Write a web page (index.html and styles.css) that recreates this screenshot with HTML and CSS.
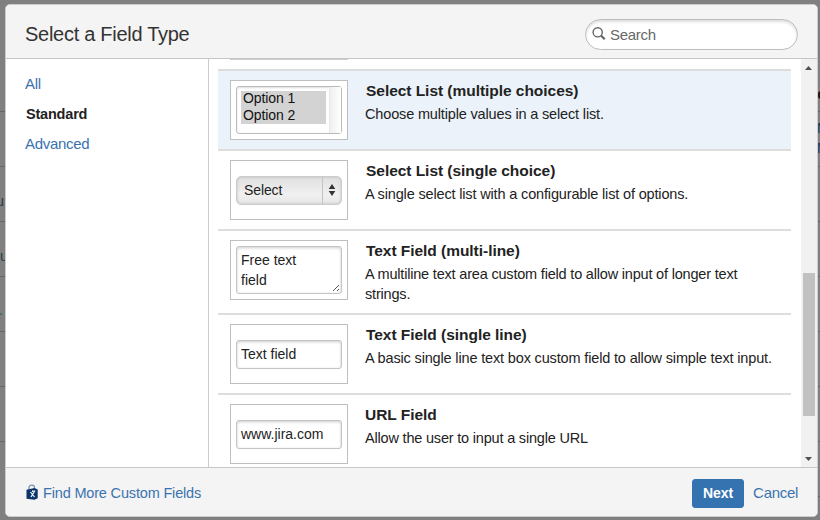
FILE: index.html
```
<!DOCTYPE html>
<html lang="en">
<head>
<meta charset="utf-8">
<title>Select a Field Type</title>
<link rel="stylesheet" href="styles.css">
</head>
<body>
<div class="page-left" aria-hidden="true"><span class="bit u1">u</span><span class="bit u2">u</span><span class="bit u3">.</span></div>
<div class="page-right" aria-hidden="true"><span class="bit e">e</span><span class="bit m1">M</span><span class="bit m2">M</span></div>
<main class="dialog">
  <header class="header">
    <h1>Select a Field Type</h1>
    <label class="search">
      <svg width="14" height="14" viewBox="0 0 14 14" fill="none" stroke="#666"><circle cx="5.7" cy="5.3" r="4.6" stroke-width="1.4"/><path d="M9 8.5l3.7 3.8" stroke-width="2.2"/></svg>
      <span>Search</span>
    </label>
  </header>
  <div class="body">
    <nav class="sidebar">
      <a class="link">All</a>
      <a class="current">Standard</a>
      <a class="link">Advanced</a>
    </nav>
    <section class="content">
      <div class="list">
        <div class="previous"><div class="preview-end"></div></div>
        <article class="row selected">
          <div class="preview"><div class="multi"><div class="options"><span>Option 1</span><span>Option 2</span></div><i></i></div></div>
          <div class="info"><h2>Select List (multiple choices)</h2><p>Choose multiple values in a select list.</p></div>
        </article>
        <article class="row">
          <div class="preview"><div class="select"><span>Select</span><i><svg width="8" height="12" viewBox="0 0 8 12" fill="#333"><path d="M4 0l3.3 5H.7zM4 12l3.3-5H.7z"/></svg></i></div></div>
          <div class="info"><h2>Select List (single choice)</h2><p>A single select list with a configurable list of options.</p></div>
        </article>
        <article class="row tall">
          <div class="preview"><div class="area">Free text<br>field<svg class="grip" width="8" height="8" viewBox="0 0 8 8" stroke="#555"><path d="M1 7l6-6M5 7l2-2"/></svg></div></div>
          <div class="info"><h2>Text Field (multi-line)</h2><p class="tight">A multiline text area custom field to allow input of longer text<br>strings.</p></div>
        </article>
        <article class="row">
          <div class="preview"><div class="input">Text field</div></div>
          <div class="info"><h2>Text Field (single line)</h2><p>A basic single line text box custom field to allow simple text input.</p></div>
        </article>
        <article class="row">
          <div class="preview"><div class="input">www.jira.com</div></div>
          <div class="info"><h2 class="flush">URL Field</h2><p class="tight">Allow the user to input a single URL</p></div>
        </article>
      </div>
      <div class="scrollbar">
        <svg width="7" height="4" viewBox="0 0 7 4" fill="#505050"><path d="M0 4L3.5 0 7 4z"/></svg>
        <div class="thumb"></div>
        <svg width="7" height="4" viewBox="0 0 7 4" fill="#505050"><path d="M0 0l3.5 4L7 0z"/></svg>
      </div>
    </section>
  </div>
  <footer class="footer">
    <a class="more">
      <svg width="12" height="16" viewBox="0 0 12 16"><path d="M3 5.5V3.5C3 .2 8.5 .2 8.5 3.500V5.500" fill="none" stroke="#7e91b0" stroke-width="1.3"/><path d="M.5 5.800L8.500 4 11.700 5.500v8.700L8.500 15.800.5 14.700z" fill="#0b346d"/><path d="M4.500 8l4 5M9 6.500l-4 6.500" stroke="#fff" stroke-width="1.200" fill="none"/><circle cx="6.800" cy="7.200" r=".9" fill="#fff"/></svg>
      <span>Find More Custom Fields</span>
    </a>
    <div class="actions"><button>Next</button><a class="cancel">Cancel</a></div>
  </footer>
</main>
</body>
</html>
```
FILE: styles.css
```
* { box-sizing: border-box; }
body {
  margin: 0;
  width: 820px;
  height: 520px;
  padding: 4px 2px 3px 5px;
  overflow: hidden;
  position: relative;
  background: #808080;
  color: #222;
  font: 15px/20px "Liberation Sans", Arial, sans-serif;
}
h1, h2, p { margin: 0; white-space: nowrap; }
.page-left, .page-right {
  position: absolute;
  top: 111px;
  height: 332px;
  background: repeating-linear-gradient(#666 0 1px, transparent 1px 55px);
}
.page-left { left: 0; width: 5px; }
.page-right { right: 0; top: 111px; width: 3px; height: 409px; }
.bit { position: absolute; font-size: 14px; line-height: 16px; color: #253d4b; }
.u1 { right: 1px; top: 82px; }
.u2 { left: 0; top: 137px; }
.u3 { left: -1px; top: 191px; color: #23605c; }
.e { right: -5px; top: -25px; font-weight: bold; color: #111; }
.m1 { left: 0; top: 9px; color: #123c66; }
.m2 { left: 0; top: 29px; color: #123c66; }
.dialog {
  position: relative;
  height: 513px;
  display: flex;
  flex-direction: column;
  border: 1px solid #ccc;
  border-radius: 5px;
  overflow: hidden;
  background: #fff;
}
.header {
  height: 54px;
  flex: none;
  display: flex;
  align-items: center;
  justify-content: space-between;
  padding: 4px 19px 0 19px;
  background: #f4f4f4;
  border-bottom: 1px solid #c6c6c6;
}
h1 { font-size: 20px; font-weight: 400; line-height: 24px; letter-spacing: -.28px; color: #333; }
.search {
  width: 213px;
  height: 31px;
  margin-top: 1px;
  display: flex;
  align-items: center;
  gap: 4px;
  padding-left: 6px;
  border: 1px solid #bdbdbd;
  border-radius: 16px;
  background: #fff;
  box-shadow: inset 0 2px 3px #ddd;
  color: #686868;
  letter-spacing: -.3px;
}
.search svg { margin-top: -1px; }
.search span { padding-top: 2px; }
.body { height: 408px; flex: none; display: flex; }
.sidebar {
  width: 203px;
  padding: 15px 19px;
  display: flex;
  flex-direction: column;
  gap: 10px;
  border-right: 1px solid #ccc;
}
.link, .more, .cancel { color: #3b73af; letter-spacing: -.3px; }
.current { font-weight: bold; font-size: 14.5px; letter-spacing: -.2px; padding-left: 1px; }
.content { flex: 1; display: flex; justify-content: space-between; padding-left: 9px; overflow: hidden; }
.list { width: 573px; }
.previous { height: 12px; padding-left: 12px; border-bottom: 2px solid #ddd; }
.preview-end { width: 118px; height: 1px; background: #ccc; }
.row { height: 80px; display: flex; gap: 17px; padding: 9px 0 0 12px; border-bottom: 2px solid #ddd; }
.tall { height: 84px; }
.selected { background: #ebf2f9; }
.preview { width: 118px; height: 60px; padding: 5px; display: flex; align-items: center; border: 1px solid #bfbfbf; background: #fff; font-size: 14px; }
.info { padding-top: 1px; }
h2 { font-size: 15.5px; line-height: 20px; font-weight: bold; letter-spacing: -.04px; padding-left: 1px; }
.flush { padding-left: 0; }
p { font-size: 14.5px; line-height: 20px; padding-top: 3px; letter-spacing: -.155px; }
.tight { letter-spacing: -.19px; }
.multi { width: 106px; height: 48px; display: flex; justify-content: space-between; border: 1px solid #bbb; border-radius: 3px; box-shadow: inset 0 1px 2px #ddd; }
.options { width: 85px; height: 33px; margin: 4px 0 0 4px; padding-left: 2px; background: #d3d3d3; color: #111; letter-spacing: -.1px; }
.options span { display: block; line-height: 17px; position: relative; top: -1px; }
.multi i { width: 12px; border-left: 1px solid #e8e8e8; background: linear-gradient(90deg, #f0f0f0, #fff); }
.select { width: 106px; height: 29px; display: flex; border: 1px solid #ccc; border-radius: 5px; background: linear-gradient(#e0e0e0, #f0f0f0 65%, #e7e7e7); box-shadow: inset 0 0 3px #bbb; line-height: 27px; padding-left: 7px; letter-spacing: -.1px; }
.select span { flex: 1; }
.select i { width: 19px; border-left: 1px solid #c3c3c3; display: grid; place-items: center; }
.input, .area { width: 106px; padding-left: 4px; border: 1px solid #c4c4c4; border-radius: 3px; box-shadow: inset 0 1px 3px #ccc; background: #fff; letter-spacing: 0; }
.input { height: 29px; line-height: 27px; }
.area { height: 48px; padding-top: 4px; line-height: 19.500px; position: relative; }
.grip { position: absolute; right: 1px; bottom: 1px; }
.scrollbar { width: 16px; padding: 7px 1px 7px 0; display: flex; flex-direction: column; align-items: center; background: #f1f1f1; }
.scrollbar svg { flex: none; }
.thumb { width: 12px; height: 143px; margin: 203px 0 41px; background: #c1c1c1; flex: none; }
.footer { flex: 1; display: flex; align-items: center; justify-content: space-between; padding: 2px 19px 0 20px; background: #f4f4f4; border-top: 1px solid #c6c6c6; }
.more { display: flex; align-items: center; gap: 5px; font-size: 14.5px; letter-spacing: -.17px; }
.more svg { margin-top: -2px; }
.actions { display: flex; align-items: center; gap: 9px; }
button { width: 52px; height: 29px; padding: 0; border: 1px solid #3572b0; border-radius: 3px; background: #3572b0; color: #fff; font: bold 14px "Liberation Sans", sans-serif; }
```
